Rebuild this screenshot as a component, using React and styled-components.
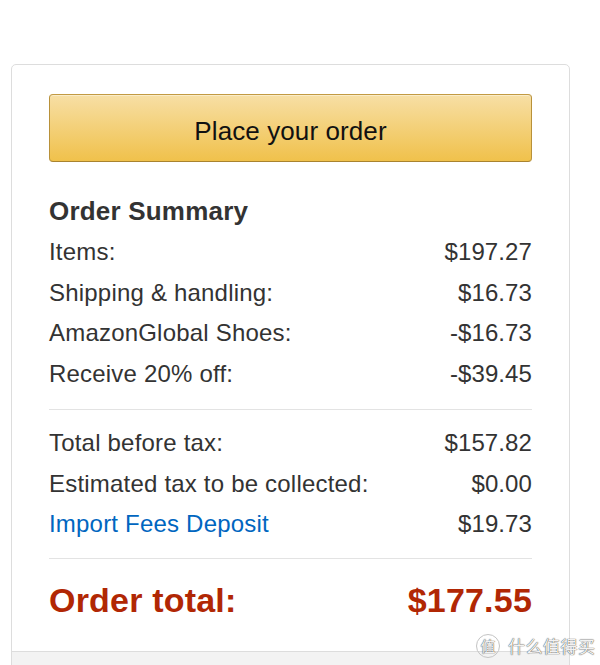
import React from 'react';
import styled, { createGlobalStyle } from 'styled-components';

const GlobalStyle = createGlobalStyle`
body{
    margin: 0;
    background: #fff;
    font-family: "Liberation Sans", Arial, sans-serif;
    color: #333;
}
`;

const Page = styled.div`
position: relative;
padding: 64px 0 0 11px;
height: 665px;
overflow: hidden;
box-sizing: border-box;
`;
const Card = styled.section`
width: 559px;
box-sizing: border-box;
border: 1px solid #ddd;
border-radius: 5px;
overflow: hidden;
`;
const Body = styled.div`
padding: 29px 37px 31px;
`;
const OrderButton = styled.button`
display: block;
width: 100%;
height: 68px;
box-sizing: border-box;
padding: 6px 0 0;
border: 1px solid;
border-color: #c29a43 #b8913a #a9832f;
border-radius: 4px;
background: linear-gradient(to bottom, #f7dfa5, #f0c14b);
box-shadow: inset 0 1px 0 rgba(255,255,255,.4);
font-family: inherit;
font-size: 26px;
line-height: 60px;
letter-spacing: 0.1px;
color: #111;
text-align: center;
cursor: pointer;
`;
const Title = styled.h3`
margin: 28px 0 0;
font-size: 26px;
line-height: 42px;
font-weight: bold;
letter-spacing: 0.2px;
color: #333;
`;
const Row = styled.div`
display: flex;
justify-content: space-between;
font-size: 24px;
line-height: 40.7px;
color: ${p => p.$link ? '#0066c0' : '#333'};
`;
const Label = styled.span`
letter-spacing: 0.2px;
`;
const Amount = styled.span`
color: #333;
letter-spacing: 0.1px;
`;
const Divider = styled.hr`
border: 0;
border-top: 1px solid #e3e3e3;
margin: ${p => p.$last ? '13px 0 22px' : '14px 0 13px'};
`;
const TotalRow = styled.div`
display: flex;
justify-content: space-between;
font-size: 34px;
line-height: 39px;
font-weight: bold;
letter-spacing: 0.2px;
color: #b12704;
`;
const Footer = styled.div`
height: 40px;
border-top: 1px solid #ddd;
background: #f3f3f3;
`;
const Watermark = styled.div`
position: absolute;
left: 476px;
top: 633px;
display: flex;
align-items: center;
gap: 8px;
font-family: "Noto Sans CJK SC", sans-serif;
color: #f2f2f2;
text-shadow: 0 0 1px rgba(0,0,0,.7), 0 0 1px rgba(0,0,0,.5);
`;
const Badge = styled.span`
width: 22px;
height: 22px;
border-radius: 50%;
border: 1.5px solid #c4c4c4;
display: flex;
align-items: center;
justify-content: center;
font-size: 15px;
line-height: 1;
`;
const Brand = styled.span`
font-size: 17px;
letter-spacing: 0.5px;
`;

const items = [
    ['Items:', '$197.27'],
    ['Shipping & handling:', '$16.73'],
    ['AmazonGlobal Shoes:', '-$16.73'],
    ['Receive 20% off:', '-$39.45'],
];
const taxes = [
    ['Total before tax:', '$157.82'],
    ['Estimated tax to be collected:', '$0.00'],
    ['Import Fees Deposit', '$19.73', true],
];

const App = () => {
    return (
        <Page>
            <GlobalStyle />
            <Card>
                <Body>
                    <OrderButton>Place your order</OrderButton>
                    <Title>Order Summary</Title>
                    {items.map(([label, value]) => (
                        <Row key={label}><Label>{label}</Label><Amount>{value}</Amount></Row>
                    ))}
                    <Divider />
                    {taxes.map(([label, value, link]) => (
                        <Row key={label} $link={link}><Label>{label}</Label><Amount>{value}</Amount></Row>
                    ))}
                    <Divider $last />
                    <TotalRow><span>Order total:</span><span>$177.55</span></TotalRow>
                </Body>
                <Footer />
            </Card>
            <Watermark>
                <Badge>值</Badge>
                <Brand>什么值得买</Brand>
            </Watermark>
        </Page>
    )
}

export default App
